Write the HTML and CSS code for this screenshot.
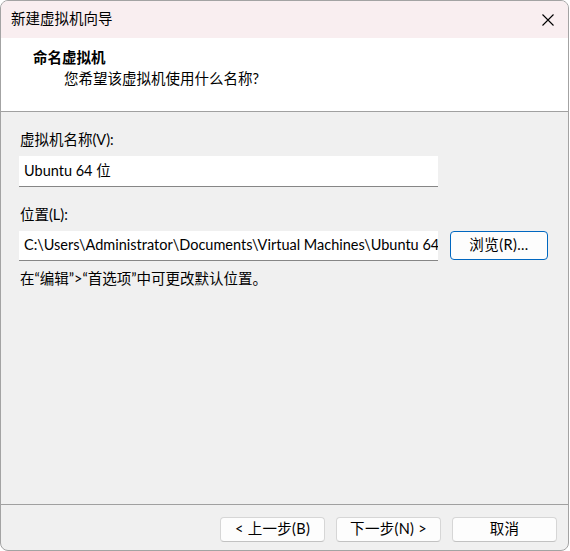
FILE: index.html
```html
<!DOCTYPE html>
<html lang="zh-CN">
<head>
<meta charset="utf-8">
<title>新建虚拟机向导</title>
<link rel="stylesheet" href="styles.css">
</head>
<body>
<div class="window">
  <div class="titlebar">
    <span class="title">新建虚拟机向导</span>
    <span class="close" aria-label="关闭">
      <svg width="12" height="12" viewBox="0 0 12 12"><path d="M0.5 0.5 L11.5 11.5 M11.5 0.5 L0.5 11.5" stroke="#000" stroke-width="1.1" fill="none"/></svg>
    </span>
  </div>
  <div class="header">
    <div class="h-title">命名虚拟机</div>
    <div class="h-sub">您希望该虚拟机使用什么名称?</div>
  </div>
  <div class="content">
    <div class="label">虚拟机名称(V):</div>
    <div class="input">Ubuntu 64 位</div>
    <div class="label label-2">位置(L):</div>
    <div class="row">
      <div class="input input-path">C:\Users\Administrator\Documents\Virtual Machines\Ubuntu 64</div>
      <div class="btn btn-browse">浏览(R)...</div>
    </div>
    <div class="hint">在“编辑”&gt;“首选项”中可更改默认位置。</div>
  </div>
  <div class="footer">
    <div class="btn btn-foot">&lt; 上一步(B)</div>
    <div class="btn btn-foot">下一步(N) &gt;</div>
    <div class="btn btn-foot">取消</div>
  </div>
</div>
</body>
</html>
```
FILE: styles.css
```css
html, body {
  margin: 0;
  padding: 0;
  background: #ffffff;
}
body {
  font-family: "Lato", "Noto Sans CJK SC", sans-serif;
  font-size: 14.5px;
  color: #000;
}
.window {
  box-sizing: border-box;
  width: 569px;
  height: 551px;
  border: 1px solid #a3a3a3;
  border-radius: 8px;
  overflow: hidden;
  background: #f0f0f0;
  display: flex;
  flex-direction: column;
}
.titlebar {
  height: 37px;
  flex: none;
  background: #f9eef0;
  display: flex;
  align-items: center;
  justify-content: space-between;
  padding: 0 14px 0 10px;
}
.title {
  font-size: 14.5px;
  line-height: 1;
}
.close {
  display: flex;
  width: 12px;
  height: 12px;
}
.header {
  height: 73px;
  flex: none;
  background: #ffffff;
  border-bottom: 1px solid #a0a0a0;
  box-sizing: content-box;
  padding: 0;
  display: flex;
  flex-direction: column;
}
.h-title {
  font-weight: bold;
  margin: 12px 0 0 32px;
  line-height: 16px;
}
.h-sub {
  margin: 5px 0 0 63px;
  line-height: 16px;
}
.content {
  flex: 1;
  padding: 20px 0 0 18px;
  display: flex;
  flex-direction: column;
}
.label {
  line-height: 16px;
  margin-left: 1px;
}
.label-2 {
  margin-top: 20px;
}
.input {
  box-sizing: border-box;
  margin-top: 8px;
  width: 419px;
  height: 31px;
  background: #fff;
  border-bottom: 1px solid #868686;
  padding: 0 0 3px 5px;
  display: flex;
  align-items: center;
  white-space: nowrap;
  overflow: hidden;
}
.row {
  display: flex;
  align-items: flex-start;
  gap: 12px;
  margin-top: 8px;
}
.row .input {
  margin-top: 0;
  height: 30px;
}
.btn {
  box-sizing: border-box;
  display: flex;
  align-items: center;
  justify-content: center;
  background: #fdfdfd;
  border-radius: 4px;
  line-height: 1;
}
.btn-browse {
  width: 98px;
  height: 29px;
  border: 1px solid #0067c0;
  letter-spacing: 0.4px;
}
.hint {
  margin-top: 10px;
  margin-left: 1px;
  line-height: 16px;
}
.footer {
  height: 46px;
  flex: none;
  border-top: 1px solid #a0a0a0;
  display: flex;
  justify-content: flex-end;
  gap: 11px;
  padding: 12px 11px 0 0;
  box-sizing: border-box;
}
.btn-foot {
  width: 105px;
  height: 25px;
  border: 1px solid #d6d6d6;
  border-bottom-color: #c2c2c2;
  letter-spacing: 0.3px;
}
```
